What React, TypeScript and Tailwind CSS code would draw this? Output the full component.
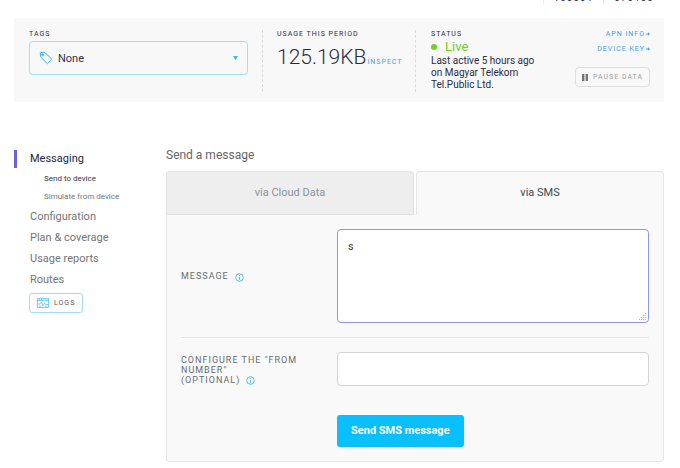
import React, { useState } from 'react'

const SIDE_LINKS = ['Configuration', 'Plan & coverage', 'Usage reports', 'Routes']

function TagIcon() {
  return (
    <svg width="14" height="14" viewBox="0 0 14 14" fill="none" stroke="#3fb8f0" strokeWidth="1" strokeLinejoin="round">
      <path d="M1.2 1.4 L6.3 1.8 L12.8 8.3 L8.4 12.7 L1.8 6.2 Z" />
      <circle cx="3.6" cy="3.8" r="0.9" fill="#3fb8f0" />
    </svg>
  )
}

function LogsIcon() {
  return (
    <svg width="12" height="10" viewBox="0 0 12 10" fill="none" stroke="#5cc4f2" strokeWidth="0.8">
      <rect x="0.5" y="0.5" width="11" height="9" />
      <path d="M0.5 2.5 H11.5 M2 1.5 H3 M4 1.5 H5 M1 6 H3 L4.5 4 L6 8 L7.5 5 L8.5 6.5 H11 M2 8 H4 M8 8.2 H10" />
    </svg>
  )
}

function InfoIcon() {
  return (
    <svg className="inline-block shrink-0" width="9" height="9" viewBox="0 0 9 9" fill="none" stroke="#3fb8f0" strokeWidth="0.9">
      <circle cx="4.5" cy="4.5" r="3.8" />
      <path d="M4.5 4 V6.8 M4.5 2.2 V3.2" />
    </svg>
  )
}

function ArrowIcon() {
  return (
    <svg width="4" height="4" viewBox="0 0 4 4" fill="#4a9cf0">
      <path d="M0 1.5 H2 V0.3 L4 2 L2 3.7 V2.5 H0 Z" />
    </svg>
  )
}

function GripIcon() {
  return (
    <svg width="7" height="7" viewBox="0 0 7 7" fill="#b5b5b5">
      <path d="M6 0h1v1h-1z M6 2h1v1h-1z M4 2h1v1h-1z M6 4h1v1h-1z M4 4h1v1h-1z M2 4h1v1h-1z M6 6h1v1h-1z M4 6h1v1h-1z M2 6h1v1h-1z M0 6h1v1h-1z" />
    </svg>
  )
}

function DeviceIds() {
  return (
    <div className="h-[18px] overflow-hidden">
      <div className="flex justify-end -mt-2 h-3 text-[10px] leading-[12px] tracking-[1px] text-[#33334a]">
        <span className="px-[10px] border-l border-[#ececec]">100001</span>
        <span className="px-[10px] border-l border-[#ececec]">070100</span>
      </div>
    </div>
  )
}

function DeviceSummary() {
  return (
    <section className="flex bg-[#f8f8f8] pl-[15px] pr-[14px] pt-3 pb-[10px] min-h-[84px] text-[#2b2b45]">
      <div className="w-[219px] shrink-0">
        <label htmlFor="tags" className="block text-[7px] leading-[8px] tracking-[1px] mb-[3px]">TAGS</label>
        <div className="relative">
          <select id="tags" className="appearance-none block w-full h-[34px] rounded border border-[#a5dcf5] bg-[#f8f8f8] pl-7 pt-[2px] text-[11px] text-[#33334a]">
            <option>None</option>
          </select>
          <span className="absolute left-[10px] top-[10px] pointer-events-none"><TagIcon /></span>
          <svg className="absolute right-[10px] top-[15px] pointer-events-none" width="5" height="4" viewBox="0 0 5 4" fill="#3fb8f0">
            <path d="M0 0 H5 L2.5 4 Z" />
          </svg>
        </div>
      </div>
      <div className="w-[154px] shrink-0 ml-[14px] pl-[14px] border-x border-dashed border-[#dcdcdc] whitespace-nowrap">
        <h2 className="text-[7px] leading-[8px] tracking-[1px]">USAGE THIS PERIOD</h2>
        <p className="flex items-baseline gap-px mt-1">
          <span className="text-[21px] leading-[30px] font-light">125.19KB</span>
          <a href="#inspect" className="text-[7px] leading-[8px] tracking-[1px] text-[#4a9cf0]">INSPECT</a>
        </p>
      </div>
      <div className="w-[125px] shrink-0 pl-[15px]">
        <h2 className="text-[7px] leading-[8px] tracking-[1px]">STATUS</h2>
        <p className="flex items-center gap-2 text-[13px] leading-[14px] mt-[2px] text-[#6fd020]">
          <span className="size-[6px] rounded-full bg-[#6fd020]" />
          Live
        </p>
        <p className="mt-px text-[10px] leading-[12px] whitespace-nowrap">Last active 5 hours ago<br />on Magyar Telekom<br />Tel.Public Ltd.</p>
      </div>
      <div className="ml-auto flex flex-col items-end text-[7px] leading-[8px] tracking-[1px] whitespace-nowrap">
        <a href="#apn" className="flex items-center gap-px text-[#4a9cf0]">APN INFO <ArrowIcon /></a>
        <a href="#key" className="flex items-center gap-px mt-[7px] text-[#4a9cf0]">DEVICE KEY <ArrowIcon /></a>
        <button className="flex items-center gap-[5px] h-5 mt-[14px] px-[6px] rounded-sm border border-[#dedede] text-[#a0a0a0]">
          <svg width="6" height="7" viewBox="0 0 6 7" fill="#777"><path d="M0 0 H2.4 V7 H0 Z M3.6 0 H6 V7 H3.6 Z" /></svg>
          PAUSE DATA
        </button>
      </div>
    </section>
  )
}

function SideNav() {
  return (
    <nav className="w-[152px] shrink-0 mt-1 text-[11px] leading-[18px] text-[#757575]">
      <a href="#messaging" className="block border-l-[3px] border-[#6a62dc] pl-[13px] text-[#25253d]">Messaging</a>
      <div className="flex flex-col pt-[2px] pl-[30px] text-[8px] tracking-normal">
        <a href="#send" className="text-[#33334a]">Send to device</a>
        <a href="#simulate">Simulate from device</a>
      </div>
      <ul className="flex flex-col gap-[3px] pl-4 mt-[2px]">
        {SIDE_LINKS.map(link => (
          <li key={link}><a href="#nav">{link}</a></li>
        ))}
      </ul>
      <button className="flex items-center gap-[5px] h-5 ml-[15px] mt-1 px-[7px] rounded-[3px] border border-[#a5dcf5] text-[7px] tracking-[1px] text-[#55555f]">
        <LogsIcon />
        LOGS
      </button>
    </nav>
  )
}

function MessageForm() {
  const [message, setMessage] = useState('s')
  const [from, setFrom] = useState('')

  return (
    <main className="flex-1 min-w-0">
      <h1 className="text-[12px] leading-[18px] text-[#666]">Send a message</h1>
      <div role="tablist" className="mt-[7px] grid grid-cols-2 h-[44px] text-[11px]">
        <div className="border-b border-[#e2e2e2] pr-px">
          <button role="tab" aria-selected="false" className="block size-full rounded-t border border-b-0 border-[#e2e2e2] bg-[#eeeeee] text-[#8a939c]">via Cloud Data</button>
        </div>
        <button role="tab" aria-selected="true" className="ml-px rounded-t border border-b-0 border-[#e6e6e6] bg-[#f9f9f9] text-[#3c4858]">via SMS</button>
      </div>
      <form className="rounded-b border border-t-0 border-[#e6e6e6] bg-[#f9f9f9] px-[14px] pb-[14px]" onSubmit={e => e.preventDefault()}>
        <div className="flex items-center py-[14px] border-b border-[#e6e6e6]">
          <label htmlFor="message" className="w-[156px] shrink-0 flex items-center gap-[6px] pt-[2px] text-[9px] tracking-[1px] text-[#6b6b6b]">
            MESSAGE <InfoIcon />
          </label>
          <div className="relative flex-1 min-w-0">
            <textarea
              id="message"
              className="block w-full h-[94px] resize-none rounded border border-[#8f96ea] bg-white px-[10px] py-[9px] text-[11px] leading-[16px] text-[#444] outline-none"
              value={message}
              onChange={e => setMessage(e.target.value)}
            />
            <span className="absolute right-[3px] bottom-[3px] pointer-events-none"><GripIcon /></span>
          </div>
        </div>
        <div className="flex pt-[14px]">
          <label htmlFor="from" className="w-[156px] shrink-0 pt-[3px] text-[9px] leading-[10px] tracking-[1px] text-[#6b6b6b]">
            CONFIGURE THE "FROM<br />NUMBER"<br />
            <span className="flex items-center gap-[6px]">(OPTIONAL) <InfoIcon /></span>
          </label>
          <input
            id="from"
            className="flex-1 min-w-0 h-[34px] rounded border border-[#d4d4d4] bg-white px-[10px] text-[11px] outline-none"
            value={from}
            onChange={e => setFrom(e.target.value)}
          />
        </div>
        <button type="submit" className="block h-8 ml-[156px] mt-[29px] px-[14px] rounded-[3px] bg-[#08bfff] text-[11px] font-bold text-white">Send SMS message</button>
      </form>
    </main>
  )
}

export default function App() {
  return (
    <div className="min-h-screen bg-white pl-[14px] pr-4 font-[Roboto,sans-serif]">
      <DeviceIds />
      <DeviceSummary />
      <div className="flex mt-11">
        <SideNav />
        <MessageForm />
      </div>
    </div>
  )
}
